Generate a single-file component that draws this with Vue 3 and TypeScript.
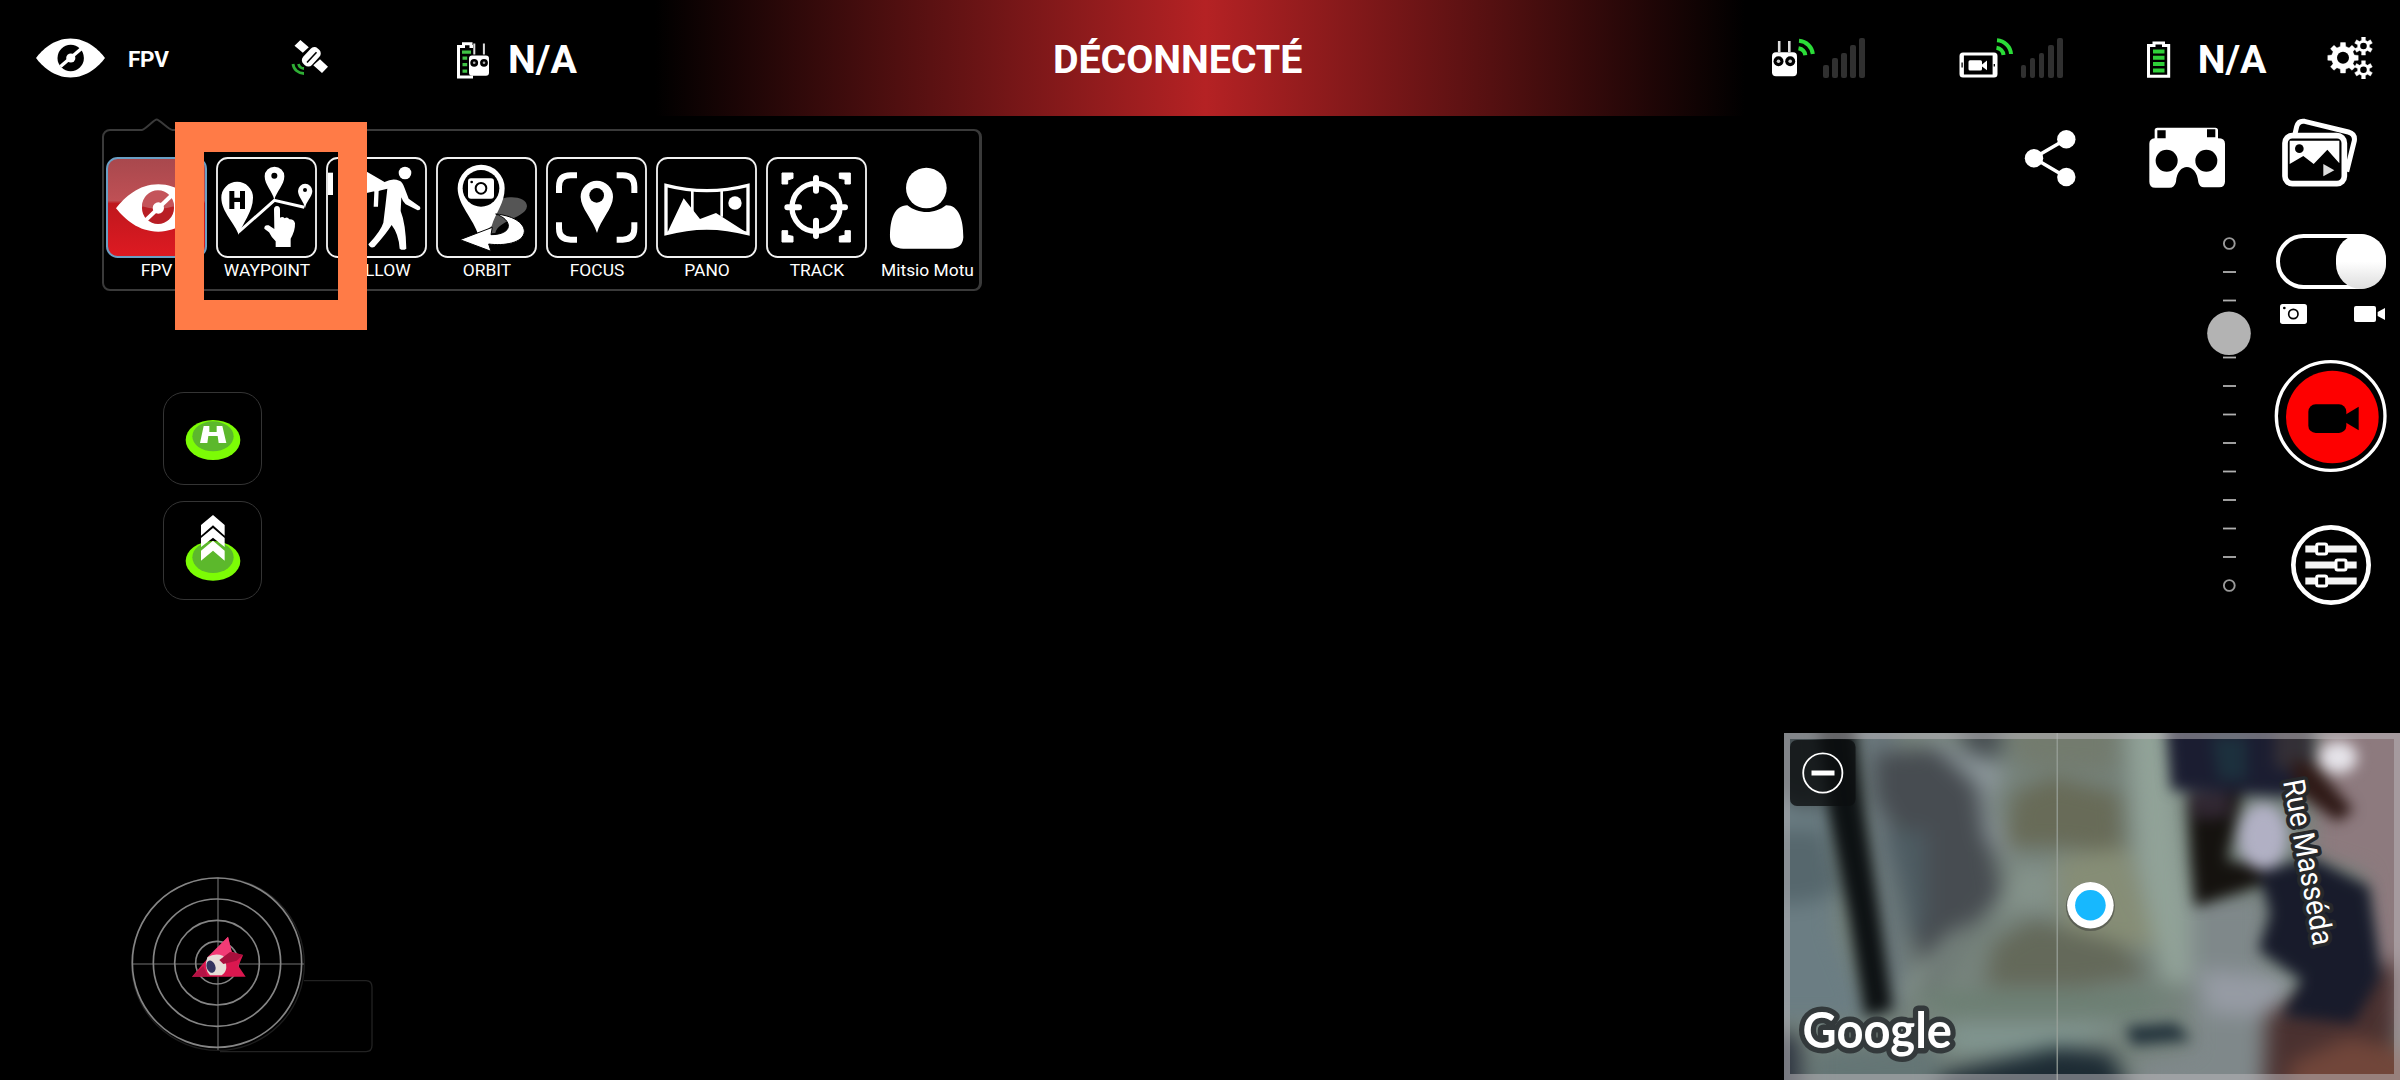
<script setup lang="ts">
interface Mode {
  id: string
  label: string
  box: string
}

const modes: Mode[] = [
  { id: 'fpv', label: 'FPV', box: '48 141 303 303' },
  { id: 'waypoint', label: 'WAYPOINT', box: '378 141 303 303' },
  { id: 'follow', label: 'FOLLOW', box: '708 141 303 303' },
  { id: 'orbit', label: 'ORBIT', box: '1038 141 303 303' },
  { id: 'focus', label: 'FOCUS', box: '18 141 303 303' },
  { id: 'pano', label: 'PANO', box: '348 141 303 303' },
  { id: 'track', label: 'TRACK', box: '678 141 303 303' },
  { id: 'user', label: 'Mitsio Motu', box: '1008 141 303 303' },
]

const bars = [13, 20, 25.5, 33, 40]
const ticks = Array.from({ length: 11 }, (_, i) => 272 + i * 28.5)

function gear(cx: number, cy: number, outer: number, inner: number, teeth: number, turn = 0): string {
  const pts: string[] = []
  const step = (Math.PI * 2) / teeth
  for (let i = 0; i < teeth; i++) {
    const a = i * step + turn
    const corners: [number, number][] = [
      [inner, -0.3],
      [outer, -0.2],
      [outer, 0.2],
      [inner, 0.3],
    ]
    for (const [r, o] of corners) {
      pts.push(`${(cx + r * Math.cos(a + o * step)).toFixed(2)},${(cy + r * Math.sin(a + o * step)).toFixed(2)}`)
    }
  }
  return pts.join(' ')
}

const bigGear = gear(2343.5, 58.3, 15.4, 11.6, 8, 0)
const topGear = gear(2364, 46.5, 9.3, 6, 6, Math.PI / 6)
const lowGear = gear(2364, 70.3, 9.3, 6, 6, Math.PI / 6)
</script>

<template>
  <div class="screen">
    <header class="bar">
      <div class="side side-left">
        <svg class="eye" width="70" height="40" viewBox="36 38 70 40">
          <path d="M36 58C42 50 54 38.500 70.500 38.500S99 50 105 58C99 66 87 77.500 70.500 77.500S42 66 36 58Z" fill="#fff" />
          <ellipse cx="70.700" cy="58" rx="13.200" ry="13.200" fill="#000" />
          <path d="M60.500 66.500L81.500 48.500" stroke="#fff" stroke-width="3.400" />
          <circle cx="70.800" cy="58" r="4.600" fill="#fff" />
        </svg>
        <span class="mode-name">FPV</span>
        <svg class="sat" width="38" height="38" viewBox="291 39 38 38">
          <path d="M294.500 45.700L300.400 40L308.800 47.300L302.800 52.700ZM313.300 65.300L320 59.300L328 66.700L322 73Z" fill="#fff" />
          <rect x="305.300" y="46.300" width="12" height="21" rx="5" fill="#fff" transform="rotate(43 311.300 56.800)" />
          <path d="M307 62.500L316.500 52.300" stroke="#000" stroke-width="1.600" />
          <path d="M293 64A11 10.500 0 0 0 304 73.500M298.500 64A6 6 0 0 0 304 68.500" stroke="#2fae35" stroke-width="2.800" fill="none" />
        </svg>
        <svg class="rcbat" width="33" height="37" viewBox="457 41.500 33 37">
          <path d="M473 76.500H458.500V46H463.500V43.300H471V46H473" fill="none" stroke="#fff" stroke-width="3" />
          <path d="M462 50h9v3.300h-9zM462.500 56h4.700v3.300h-4.700zM462.500 62.500h4.700v3.300h-4.700zM462.500 69h4.700v3.300h-4.700z" fill="#3fc244" />
          <path d="M474.300 43V54M483.900 43V54" stroke="#ddd" stroke-width="2" />
          <rect x="469" y="55" width="20" height="20.300" rx="3" fill="#fff" />
          <circle cx="474.200" cy="62.300" r="3.900" fill="#000" /><circle cx="484" cy="62.300" r="3.900" fill="#000" />
          <circle cx="474.200" cy="62.300" r="1.300" fill="#aaa" /><circle cx="484" cy="62.300" r="1.300" fill="#aaa" />
        </svg>
        <span class="value">N/A</span>
      </div>

      <div class="status"><span>DÉCONNECTÉ</span></div>

      <div class="side side-right">
        <svg class="rc" width="44" height="40" viewBox="1771 38 44 40">
          <path d="M1779.200 41V52M1789.300 41V52" stroke="#ddd" stroke-width="2.600" />
          <rect x="1772" y="52.300" width="25" height="24" rx="4" fill="#fff" />
          <circle cx="1778.500" cy="61.300" r="5" fill="#000" /><circle cx="1790.200" cy="61.300" r="5" fill="#000" />
          <circle cx="1778.500" cy="61.300" r="1.800" fill="#ccc" /><circle cx="1790.200" cy="61.300" r="1.800" fill="#ccc" />
          <path d="M1799 40.800A15 14.500 0 0 1 1812.800 54M1798.500 48.300A8.500 8 0 0 1 1805.300 55.300" fill="none" stroke="#2bdc38" stroke-width="4" />
        </svg>
        <div class="bars bars-a"><i v-for="h in bars" :key="h" :style="{ height: h + 'px' }"></i></div>
        <svg class="vid" width="55" height="40" viewBox="1959.500 37.500 55 40">
          <rect x="1961.500" y="53.500" width="35" height="22" rx="2" fill="none" stroke="#fff" stroke-width="3" />
          <path d="M1963.200 53V76M1994.300 53V76" stroke="#fff" stroke-width="2.400" />
          <path d="M1962.600 62V67M1994.800 63.500V66" stroke="#000" stroke-width="1.300" />
          <rect x="1969" y="59.800" width="13.500" height="10.200" rx="1.500" fill="#fff" />
          <path d="M1982.500 64L1987.500 60V69.800L1982.500 66Z" fill="#fff" />
          <path d="M1997.500 39.800A15 14.500 0 0 1 2011.500 53.500M1997 47.200A8.500 8 0 0 1 2004 54.500" fill="none" stroke="#2bdc38" stroke-width="4" />
        </svg>
        <div class="bars bars-b"><i v-for="h in bars" :key="h" :style="{ height: h + 'px' }"></i></div>
        <svg class="bat" width="24" height="37" viewBox="2147 41.300 24 37">
          <path d="M2148.500 76.500V45.800H2154V43.300H2163.500V45.800H2168.700V76.500Z" fill="none" stroke="#fff" stroke-width="3" />
          <path d="M2153 49.700h11.500v4H2153zM2153 56h11.500v4H2153zM2153 62.300h11.500v4H2153zM2153 68.700h11.500v4H2153z" fill="#2fd039" />
        </svg>
        <span class="value">N/A</span>
        <svg class="gears" width="47" height="42" viewBox="2327.500 37.500 47 42">
          <g fill="#fff" stroke="#fff" stroke-width=".4">
            <polygon :points="bigGear" /><polygon :points="topGear" /><polygon :points="lowGear" />
          </g>
          <circle cx="2343.500" cy="58.300" r="6" /><circle cx="2364" cy="46.500" r="3.300" /><circle cx="2364" cy="70.300" r="3.300" />
        </svg>
      </div>
    </header>

    <main class="body">
      <section class="left">
        <nav class="menu">
          <svg class="notch" width="40" height="14" viewBox="137 118 40 14">
            <path d="M141 131.500H173V128H141Z" fill="#000" />
            <path d="M137 130H141.500C145 130 154 119.500 156.700 119.500S169 130 172.500 130H177" fill="none" stroke="#3a3a3a" stroke-width="2" />
          </svg>
          <div v-for="m in modes" :key="m.id" class="mode">
            <svg :class="['tile', m.id]" width="101" height="101" :viewBox="m.box">
              <g v-if="m.id === 'fpv'">
                <defs>
                  <linearGradient id="red" x1="0" y1="0" x2="0" y2="1">
                    <stop offset="0" stop-color="#a8484d" /><stop offset=".43" stop-color="#bf5055" />
                    <stop offset=".46" stop-color="#bf171d" /><stop offset="1" stop-color="#de1a22" />
                  </linearGradient>
                </defs>
                <rect x="51" y="144" width="297" height="297" rx="32" fill="url(#red)" stroke="#6a9fc4" stroke-width="6" />
                <path d="M78 295C105 262 145 223 205 223S300 262 330 295C300 328 265 365 205 365S105 328 78 295Z" fill="#fff" />
                <circle cx="204" cy="294" r="48" fill="#b81e25" />
                <path d="M156 289A48 48 0 0 1 252 289Q204 305 156 289Z" fill="#c4545a" />
                <path d="M166 332L243 258" stroke="#fff" stroke-width="12" /><circle cx="205" cy="294" r="17" fill="#fff" />
              </g>
              <g v-else-if="m.id === 'waypoint'" fill="#fff">
                <path d="M446 374C436 342 394 305 394 263A47 47 0 0 1 489 263C489 305 456 342 446 374Z" />
                <path d="M418 243H433V263H450V243H465V297H450V276H433V297H418Z" fill="#000" />
                <path d="M553 270C548 245 524 225 524 199A29 28 0 0 1 583 199C583 225 559 245 553 270Z" /><circle cx="553" cy="197" r="9" fill="#000" />
                <path d="M645 295C642 275 624 260 624 243A21 21 0 0 1 667 243C667 260 648 275 645 295Z" /><circle cx="645" cy="240" r="6" fill="#000" />
                <path d="M446 366L553 271L643 292" fill="none" stroke="#fff" stroke-width="9" />
                <path d="M552 299Q552 288 561 288T570 299V323Q578 318 584 325Q592 319 598 328Q612 327 615 340Q616 362 602 386V411H557V394Q544 382 537 367L523 356Q522 343 536 346L553 357Z" />
              </g>
              <g v-else-if="m.id === 'follow'" fill="#fff">
                <path d="M714 188H729V255H714Z" />
                <path d="M770 150L890 220L866 243L864 290H851L853 244L780 260Z" />
                <circle cx="945" cy="189" r="19" />
                <path d="M884 216Q908 203 928 212Q938 215 944 235L956 266L990 290Q994 300 983 301L947 283Q938 275 934 262L932 303Q947 340 949 416Q939 423 929 416Q926 372 905 345Q888 372 853 411Q840 416 835 403Q873 362 880 338Q886 290 892 236L852 246Z" />
              </g>
              <g v-else-if="m.id === 'orbit'">
                <path d="M1225 272C1250 255 1311 258 1311 289C1308 325 1225 328 1216 369L1170 372C1190 330 1200 290 1225 272Z" fill="#555" />
                <path d="M1166 378C1150 325 1103 285 1103 235A70 70 0 0 1 1244 235C1244 280 1216 310 1205 348Z" fill="#fff" />
                <circle cx="1173" cy="235" r="55" fill="#000" /><rect x="1134" y="205" width="78" height="61" rx="9" fill="#fff" />
                <circle cx="1173" cy="235" r="16" fill="#fff" stroke="#000" stroke-width="6" /><circle cx="1145" cy="216" r="4" fill="#000" />
                <path d="M1110 389L1207 352L1203 374C1270 374 1270 330 1217 312C1280 318 1304 345 1303 365C1300 400 1240 408 1196 402L1203 424Z" fill="#fff" stroke="#000" stroke-width="3" />
              </g>
              <g v-else-if="m.id === 'focus'">
                <path d="M57 249V230Q57 196 92 196H111M230 196H248Q283 196 283 230V249M283 337V355Q283 389 248 389H230M111 389H92Q57 389 57 355V337" fill="none" stroke="#fff" stroke-width="18" />
                <path d="M171 369C160 330 122 295 122 261A48 48 0 0 1 219 261C219 295 181 330 171 369Z" fill="#fff" /><circle cx="170" cy="256" r="22" />
              </g>
              <g v-else-if="m.id === 'pano'">
                <path d="M378 226Q500 258 624 226V371Q500 337 378 371Z" fill="none" stroke="#fff" stroke-width="10" />
                <path d="M457 242V310M545 242V320" stroke="#fff" stroke-width="8" />
                <path d="M382 368L431 265L480 327L528 309L622 369Q500 337 382 368Z" fill="#fff" /><circle cx="585" cy="279" r="20" fill="#fff" />
              </g>
              <g v-else-if="m.id === 'track'">
                <circle cx="828" cy="292" r="72" fill="none" stroke="#fff" stroke-width="16" />
                <path d="M828 204V242M828 332V378M742 292H777M880 292H915" stroke="#fff" stroke-width="18" stroke-linecap="round" />
                <path d="M726 189H759V205L743 210V222H726ZM898 189H931V222H915V208L898 205ZM726 362H743V376L759 379V396H726ZM931 362V396H898V379L915 376V362Z" fill="#fff" stroke="#fff" stroke-width="3" stroke-linejoin="round" />
              </g>
              <g v-else fill="#fff">
                <circle cx="1159" cy="234" r="61" />
                <path d="M1102 286C1135 313 1185 313 1218 286C1255 285 1270 325 1270 382Q1268 416 1230 416H1090Q1052 416 1050 382C1050 325 1064 287 1102 286Z" />
              </g>
              <rect v-if="m.id !== 'fpv' && m.id !== 'user'" :x="Number(m.box.split(' ')[0]) + 3" y="144" width="297" height="297" rx="32" fill="none" stroke="#f2f2f2" stroke-width="5.500" />
            </svg>
            <span :class="['caption', m.id]">{{ m.label }}</span>
          </div>
          <div class="highlight"></div>
        </nav>

        <div class="actions">
          <button class="action home">
            <svg width="60" height="60" viewBox="99 90 180 180">
              <ellipse cx="189" cy="180" rx="82" ry="60" fill="#7cfc05" /><ellipse cx="189" cy="169" rx="62" ry="45" fill="#5cb82c" />
              <path d="M161 138H178V156H200V138H217L229 189H206L203 168H175L172 189H150Z" fill="#fff" />
            </svg>
          </button>
          <button class="action takeoff">
            <svg width="60" height="70" viewBox="99 400 180 210">
              <ellipse cx="189" cy="544" rx="82" ry="59" fill="#7cfc05" /><ellipse cx="189" cy="533" rx="62" ry="47" fill="#5cb82c" />
              <path d="M153 436L189 406L224 436V468L189 437L153 468ZM153 475L189 445L224 475V502L189 474L153 502ZM153 513L189 483L224 513V543L189 513L153 543Z" fill="#fff" />
            </svg>
          </button>
        </div>

        <svg class="radar" width="270" height="210" viewBox="0 0 810 630">
          <path d="M552 362H738Q756 362 756 382V556Q756 575 738 575H300" fill="none" stroke="#222" stroke-width="4" />
          <circle cx="294" cy="312" r="259" fill="#000" stroke="#1d1d1d" stroke-width="4" />
          <path d="M294 52V570M36 312H552" stroke="#4c4c4c" stroke-width="5" />
          <g fill="none" stroke="#858585" stroke-width="5">
            <circle cx="291" cy="308" r="254" /><circle cx="291" cy="308" r="191" /><circle cx="291" cy="308" r="127" /><circle cx="291" cy="308" r="64" />
          </g>
          <path d="M324 230L335 275L369 286L355 318L377 350H216L250 310Z" fill="#da174f" />
          <path d="M324 230L335 275L300 300L262 292Z" fill="#f33b76" />
          <path d="M262 292Q285 278 310 288Q330 330 305 346H270Q250 325 262 292Z" fill="#e6ded8" />
          <path d="M298 300L330 276L369 284L350 302L310 312Z" fill="#a90f3d" />
          <path d="M216 350L250 318L262 347Z" fill="#b31345" />
          <ellipse cx="273" cy="320" rx="13" ry="19" fill="#34345f" transform="rotate(-20 273 320)" />
        </svg>
      </section>

      <section class="right">
        <div class="tools">
          <svg width="54" height="60" viewBox="2024 128 54 60">
            <path d="M2066 139.300L2033.700 158L2066 177" stroke="#fff" stroke-width="3.600" fill="none" />
            <g fill="#fff"><circle cx="2034" cy="158.200" r="9.200" /><circle cx="2066.300" cy="139.300" r="9.200" /><circle cx="2066.300" cy="177" r="9.200" /></g>
          </svg>
          <svg class="vr" width="78" height="62" viewBox="444 50 234 186">
            <path d="M464 60Q464 52 472 52H646Q654 52 654 60V84Q675 84 675 100V214Q674 231 658 231H612Q598 231 595 216C590 155 532 155 528 214Q524 232 508 232H466Q448 232 448 214V100Q448 86 464 84Z" fill="#fff" />
            <path d="M472 60H497V84H472ZM621 57H646V81H621Z" /><circle cx="500" cy="151" r="33" /><circle cx="619" cy="151" r="33" />
          </svg>
          <svg class="gallery" width="78" height="70" viewBox="843 24 234 210">
            <path d="M885 72L890 50Q895 31 914 34L1045 66Q1066 72 1063 92L1040 185" fill="none" stroke="#fff" stroke-width="15" />
            <rect x="855" y="77" width="178" height="144" rx="22" fill="#000" stroke="#fff" stroke-width="17" />
            <path d="M869 92H1018V160L982 119L941 162L910 138L869 162Z" fill="#fff" /><circle cx="898" cy="116" r="13" /><path d="M970 162L1003 181L970 199Z" fill="#ddd" />
          </svg>
        </div>

        <div class="controls">
          <svg class="zoom" width="46" height="362" viewBox="2206 234 46 362">
            <circle cx="2229.300" cy="243.500" r="5.400" fill="none" stroke="#9a9a9a" stroke-width="1.900" />
            <path v-for="y in ticks" :key="y" :d="`M2223 ${y}H2236`" stroke="#b0b0b0" stroke-width="1.800" />
            <circle cx="2229.300" cy="585.500" r="5.400" fill="none" stroke="#9a9a9a" stroke-width="1.900" />
            <circle cx="2229" cy="333.300" r="21.800" fill="#b3b3b3" />
          </svg>
          <div class="capture">
            <div class="switch"><i></i></div>
            <div class="kinds">
              <svg width="27" height="20" viewBox="840 582 81 60">
                <rect x="840" y="582" width="81" height="60" rx="8" fill="#fff" /><circle cx="880" cy="612" r="14" fill="none" stroke="#000" stroke-width="5" /><circle cx="853" cy="594" r="4" />
              </svg>
              <svg width="32" height="16" viewBox="1059 588 96 48">
                <rect x="1059" y="588" width="66" height="48" rx="6" fill="#fff" /><path d="M1130 606L1152 594V630L1130 618Z" fill="#fff" />
              </svg>
            </div>
            <svg class="record" width="114" height="114" viewBox="281 176 342 342">
              <circle cx="451" cy="347" r="163" fill="none" stroke="#fff" stroke-width="10" /><circle cx="456" cy="350" r="139" fill="#fe0000" />
              <rect x="384" y="312" width="114" height="86" rx="22" /><path d="M495 343L535 319V390L495 366Z" />
            </svg>
            <svg class="tune" width="82" height="82" viewBox="330 672 246 246">
              <circle cx="453" cy="795" r="113" fill="none" stroke="#fff" stroke-width="14" />
              <path d="M376 747H530M376 795H530M376 843H530" stroke="#f4f4f4" stroke-width="21" />
              <g fill="#000" stroke="#fff" stroke-width="9"><rect x="410" y="732" width="30" height="30" rx="5" /><rect x="468" y="780" width="30" height="30" rx="5" /><rect x="410" y="828" width="30" height="30" rx="5" /></g>
            </svg>
          </div>
        </div>

        <div class="map">
          <svg class="terrain" width="616" height="347" viewBox="10 9 1558 1041" preserveAspectRatio="none">
            <defs>
              <filter id="soft" x="-20%" y="-20%" width="140%" height="140%" color-interpolation-filters="sRGB"><feGaussianBlur stdDeviation="27 30" /></filter>
              <filter id="crisp" x="-20%" y="-20%" width="140%" height="140%" color-interpolation-filters="sRGB"><feGaussianBlur stdDeviation="17 20" /></filter>
            </defs>
            <rect x="0" y="0" width="1580" height="1060" fill="#76837c" />
            <g filter="url(#soft)">
              <path d="M-90 -90H140V600L230 870H-90Z" fill="#6b7d83" />
              <path d="M-90 -90H110V230H60L-90 150Z" fill="#465054" />
              <path d="M-90 300H110L160 480L60 520H-90Z" fill="#56676d" />
              <path d="M180 -90H300L280 400L330 800L270 860Z" fill="#69767b" />
              <path d="M240 70L430 50L510 180L530 330L560 490L470 620L360 790L330 500L300 320L240 200Z" fill="#474c51" />
              <path d="M270 300H370V560L330 640Z" fill="#4d5b62" />
              <path d="M440 -90H560V90L470 70Z" fill="#484f52" />
              <path d="M330 -20L450 60L570 110L530 220L590 400L520 330L500 170L420 80Z" fill="#8b969a" />
              <path d="M570 -90H860L850 130L600 110Z" fill="#737b6e" />
              <path d="M590 190L690 140L860 190L870 370L700 350L570 350Z" fill="#686b58" />
              <path d="M600 400L700 410V540H590L500 560L330 810L290 790L430 610L540 540Z" fill="#84928a" />
              <path d="M700 380L880 350L950 650L720 650Z" fill="#868d76" />
              <path d="M540 640L640 570L860 640L930 740L760 770L520 770Z" fill="#64695a" />
              <path d="M870 -90H980L1040 540V760L970 760L900 400Z" fill="#91a298" />
              <path d="M330 790H1000L900 850H420Z" fill="#6b7f72" />
              <path d="M420 880H1040V800L1100 780L1080 880L860 890L700 970H430Z" fill="#80958f" />
              <path d="M-90 880L50 920L60 1140H-90Z" fill="#2d3440" />
              <path d="M80 960L400 940L400 1140H80Z" fill="#647575" />
              <path d="M410 1030L560 990L700 950L840 970L900 1140H380Z" fill="#1d2b34" />
              <path d="M1040 500H1230V1140H900V990L1040 960Z" fill="#7f888a" />
              <path d="M1060 720L1300 740L1250 860L1080 850Z" fill="#969ba4" />
              <path d="M1370 -90H1660V900H1500L1480 430L1350 380V280Z" fill="#8d7a7e" />
              <path d="M1230 850L1560 690V1140H1220Z" fill="#4a3130" />
              <path d="M1290 1000L1440 920L1660 980V1140H1280Z" fill="#71463a" />
            </g>
            <g filter="url(#crisp)">
              <path d="M85 -60H185L215 260L250 540L285 840L215 860L175 560L120 230Z" fill="#0d1113" />
              <path d="M875 890L1000 880L1040 930L890 945Z" fill="#22323b" />
              <path d="M975 -60H1350L1330 160L1290 200L1130 190L990 180Z" fill="#1b1d31" />
              <path d="M1090 20H1180V150H1110Z" fill="#1c303d" />
              <path d="M1250 -40H1350V140L1250 110Z" fill="#332f36" />
              <path d="M1030 200L1170 190L1130 390L1300 430L1180 480L1050 530L1040 400Z" fill="#15120f" />
              <path d="M1030 190H1140V260L1050 270Z" fill="#302631" />
              <path d="M1290 90L1350 100L1450 240L1410 275L1310 190Z" fill="#2f1a17" />
              <ellipse cx="1412" cy="82" rx="48" ry="48" fill="#e6e4ea" />
              <ellipse cx="1222" cy="320" rx="62" ry="100" fill="#b1b0c4" />
              <path d="M1210 430L1340 380L1490 470L1510 640L1520 740L1450 880L1270 860L1320 750L1210 660L1240 550Z" fill="#181b2b" />
            </g>
            <path d="M701 9V1050" stroke="#9ba39c" stroke-width="3" />
          </svg>
          <div class="frame"></div>
          <svg class="marks" width="616" height="347" viewBox="1784 733 616 347">
            <rect x="1790" y="740" width="65.500" height="66" rx="7" fill="#0b0e0f" fill-opacity=".78" />
            <circle cx="1822.800" cy="773" r="19.600" fill="none" stroke="#fff" stroke-width="1.800" />
            <path d="M1811.500 773H1834.500" stroke="#fff" stroke-width="5" />
            <circle cx="2090.400" cy="906.500" r="24.500" fill="#333" fill-opacity=".45" />
            <circle cx="2090.400" cy="905.300" r="23.300" fill="#fff" /><circle cx="2090.400" cy="905.300" r="15.300" fill="#17b8fe" />
            <text class="street" transform="translate(2283 781.500) rotate(79.500)" textLength="168" lengthAdjust="spacingAndGlyphs">Rue Masséda</text>
            <text class="brand" x="1802.500" y="1047.500" textLength="149.500" lengthAdjust="spacingAndGlyphs">Google</text>
          </svg>
        </div>
      </section>
    </main>
  </div>
</template>

<style>
body {
  background: #000;
}
</style>

<style scoped>
.screen {
  width: 2400px;
  height: 1080px;
  overflow: hidden;
  background: #000;
  color: #fff;
  font-family: Roboto, "Liberation Sans", sans-serif;
  display: flex;
  flex-direction: column;
}
svg { display: block; flex: none; }
.bar { height: 116px; display: flex; }
.side { display: flex; align-items: center; flex: none; box-sizing: border-box; }
.side-left { width: 655px; padding-left: 36px; }
.mode-name { font-weight: 700; font-size: 22.5px; letter-spacing: -0.3px; width: 42px; margin: 2px 0 0 22px; }
.sat { margin-left: 121px; }
.rcbat { margin: 4px 0 0 128px; }
.value { font-weight: 700; font-size: 39.4px; line-height: 46px; padding-top: 3px; }
.rcbat + .value { margin-left: 18px; }
.status {
  width: 1090px;
  flex: none;
  display: flex;
  align-items: center;
  background: linear-gradient(90deg, #000 0%, #b52224 50.5%, #000 100%);
}
.status span { font-weight: 700; font-size: 39.4px; line-height: 46px; letter-spacing: -0.1px; padding-top: 3px; margin-left: 398px; }
.side-right { width: 655px; padding-left: 26px; }
.bars { display: flex; align-items: flex-end; gap: 3.6px; height: 40px; }
.bars i { width: 5.5px; border-radius: 2px; background: #303030; }
.bars-a { margin-left: 8px; }
.vid { margin-left: 94.400px; }
.bars-b { margin-left: 6.500px; }
.bat { margin: 3px 0 0 84px; }
.bat + .value { margin-left: 27px; width: 69px; }
.gears { margin-left: 60.500px; }

.body { height: 964px; display: flex; justify-content: space-between; }
.left { width: 1000px; display: flex; flex-direction: column; align-items: flex-start; }
.menu {
  position: relative;
  box-sizing: border-box;
  width: 880px;
  height: 162px;
  margin: 13px 0 0 102px;
  padding: 26px 0 0 2px;
  border: 2px solid #3a3a3a;
  border-right-width: 3px;
  border-radius: 8px;
  display: flex;
  gap: 9px;
}
.notch { position: absolute; left: 33px; top: -13px; }
.mode { width: 101px; display: flex; flex-direction: column; align-items: center; flex: none; }
.caption { font-size: 17.4px; line-height: 20px; margin: 2px 0 0 1px; white-space: nowrap; }
.caption.user { margin-left: 2px; }
.caption.fpv { margin-left: 0; }
.highlight {
  position: absolute;
  left: 71px;
  top: -9px;
  width: 134px;
  height: 148px;
  border: 30px solid #ff7b47;
  border-width: 30px 29px;
}
.actions { display: flex; flex-direction: column; gap: 16px; margin: 101px 0 0 163px; }
.action {
  box-sizing: border-box;
  width: 99px;
  height: 93px;
  padding: 0;
  border: 1px solid #343434;
  border-radius: 21px;
  background: #000;
  display: flex;
  justify-content: center;
}
.home svg { margin-top: 17px; }
.takeoff { height: 99px; }
.takeoff svg { margin-top: 11px; }
.radar { margin: 260px 0 0 120px; }

.right { width: 616px; display: flex; flex-direction: column; }
.tools { display: flex; align-items: flex-start; height: 118px; padding-left: 240px; }
.tools svg:first-child { margin-top: 12px; }
.vr { margin: 10.500px 0 0 70px; }
.gallery { margin: 2px 0 0 55px; }
.controls { display: flex; padding-left: 422px; }
.capture { display: flex; flex-direction: column; margin-left: 24px; }
.switch {
  box-sizing: border-box;
  width: 110px;
  height: 55px;
  border: 4px solid #fff;
  border-radius: 28px;
  display: flex;
  justify-content: flex-end;
}
.switch i { width: 50px; height: 55px; margin: -4px; border-radius: 26px; background: linear-gradient(#fff 50%, #ddd); }
.kinds { display: flex; justify-content: space-between; align-items: center; margin: 15px 1px 0 4px; }
.kinds svg:last-child { margin-right: 1px; }
.record { margin: 34.700px 0 0 -2.300px; }
.tune { margin: 51.300px 0 0 14px; }
.map { position: relative; margin-top: auto; height: 347px; }
.frame { position: absolute; inset: 0; border: 6px solid rgba(190, 185, 190, 0.5); }
.marks { position: absolute; left: 0; top: 0; }
.street { font-size: 30px; fill: #fff; stroke: #26282b; stroke-width: 8px; stroke-linejoin: round; paint-order: stroke; }
.brand { font-family: Lato, sans-serif; font-weight: 700; font-size: 49px; fill: #fff; stroke: #33393b; stroke-width: 11px; stroke-linejoin: round; paint-order: stroke; }
</style>
